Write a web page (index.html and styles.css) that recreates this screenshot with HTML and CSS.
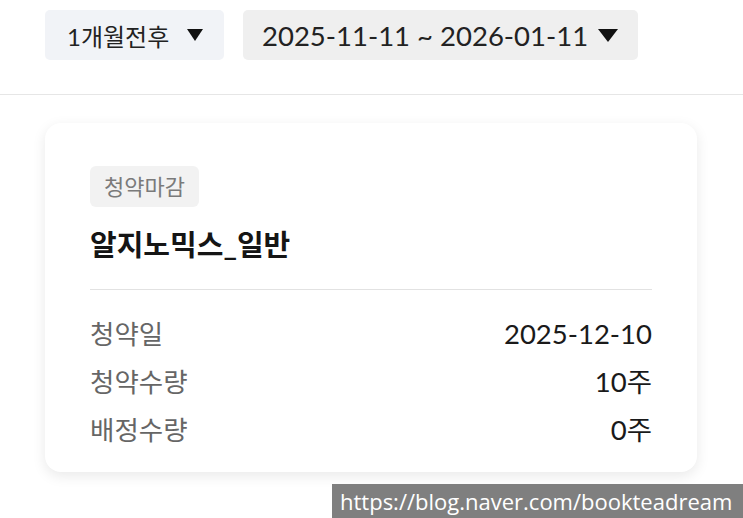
FILE: index.html
```html
<!DOCTYPE html>
<html lang="ko">
<head>
    <meta charset="UTF-8">
    <meta name="viewport" content="width=device-width, initial-scale=1.0">
    <title>청약내역</title>
    <link rel="stylesheet" href="styles.css">
</head>
<body>
    <div class="filters">
        <button class="filter filter-period">1개월전후 <span class="caret"></span></button>
        <button class="filter filter-range">2025-11-11 ~ 2026-01-11 <span class="caret"></span></button>
    </div>

    <div class="list">
        <div class="card">
            <span class="badge">청약마감</span>
            <h3 class="card-title">알지노믹스_일반</h3>
            <div class="rows">
                <div class="row"><span class="label">청약일</span><span class="value">2025-12-10</span></div>
                <div class="row"><span class="label">청약수량</span><span class="value">10주</span></div>
                <div class="row"><span class="label">배정수량</span><span class="value">0주</span></div>
            </div>
        </div>
    </div>

    <div class="watermark">https://blog.naver.com/bookteadream</div>
</body>
</html>
```

FILE: styles.css
```css
body {
    font-family: 'Lato', 'Noto Sans CJK KR', sans-serif;
    background-color: #ffffff;
    color: #1a1a1a;
    margin: 0;
    padding: 0;
    height: 518px;
    position: relative;
    overflow: hidden;
}
.filters {
    display: flex;
    gap: 19px;
    padding: 10px 0 0 45px;
    height: 95px;
    box-sizing: border-box;
    border-bottom: 1px solid #e6e6e6;
}
.filter {
    height: 50px;
    border: none;
    border-radius: 5px;
    font-family: inherit;
    color: #222;
    display: flex;
    align-items: center;
    padding: 0 20px;
    white-space: nowrap;
}
.filter-period {
    width: 179px;
    background-color: #f1f3f7;
    font-size: 24px;
    gap: 18px;
    padding-left: 22px;
}
.filter-range {
    width: 395px;
    background-color: #efefef;
    font-size: 27.5px;
    gap: 10px;
    padding: 0 14px 0 19px;
}
.caret {
    flex-shrink: 0;
    width: 0;
    height: 0;
    border-left: 8.5px solid transparent;
    border-right: 8.5px solid transparent;
    border-top: 12px solid #111;
}
.filter-range .caret {
    border-left-width: 10px;
    border-right-width: 10px;
    border-top-width: 13px;
}
.list {
    padding: 28px 45px 0 45px;
}
.card {
    width: 652px;
    box-sizing: border-box;
    padding: 43px 45px 18px 45px;
    border-radius: 16px;
    background: #fff;
    box-shadow: 0 4px 14px rgba(0, 0, 0, 0.09);
}
.badge {
    display: inline-block;
    height: 41px;
    line-height: 41px;
    padding: 0 14px;
    font-size: 22px;
    color: #7a7a7a;
    background-color: #f2f2f2;
    border-radius: 6px;
}
.card-title {
    margin: 21px 0 0 0;
    font-size: 29px;
    line-height: 34px;
    font-weight: 700;
    color: #151515;
    padding-bottom: 27px;
    border-bottom: 1px solid #e2e2e2;
}
.rows {
    margin-top: 20px;
}
.row {
    display: flex;
    justify-content: space-between;
    height: 48px;
    line-height: 48px;
}
.label {
    color: #666;
    font-size: 26.5px;
}
.value {
    color: #1a1a1a;
    font-size: 27.5px;
}
.watermark {
    position: absolute;
    right: 0;
    bottom: 0;
    left: 332px;
    height: 34px;
    line-height: 34px;
    background-color: #7f7f7f;
    color: #fff;
    font-family: 'Open Sans', sans-serif;
    font-size: 22px;
    padding-left: 8px;
    white-space: nowrap;
}
```
